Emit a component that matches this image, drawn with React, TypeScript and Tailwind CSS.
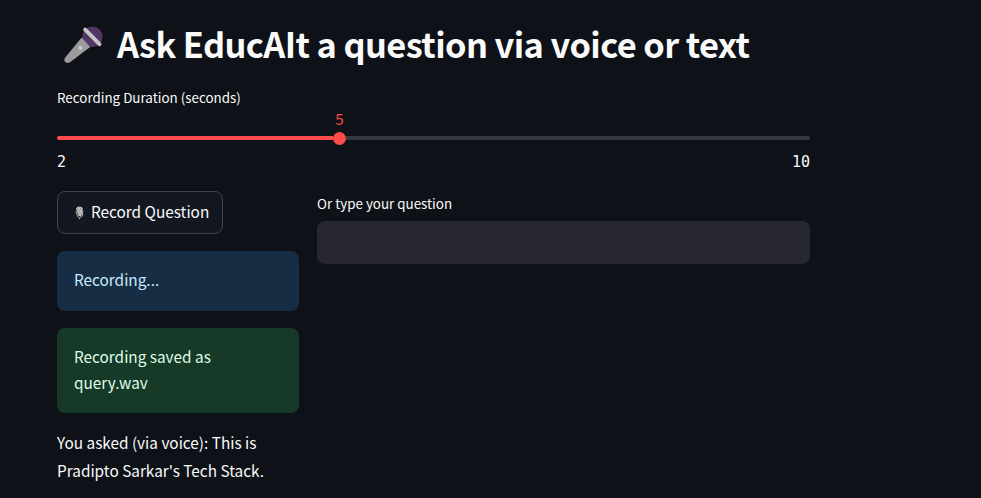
import React from "react";

const sans = "font-['Noto_Sans_CJK_SC','Noto_Sans',sans-serif]";
const mono = "font-['DejaVu_Sans_Mono','Liberation_Mono',monospace]";

function Microphone() {
  return (
    <svg className="ml-[7px] mt-[6px] h-[38px] w-[40px] shrink-0" viewBox="0 0 40 38" aria-hidden="true">
      <circle cx="28.4" cy="10.8" r="10.2" fill="#533566" />
      <path d="M17.7 11.6 L1.2 31.6 Q-0.6 34.2 1.4 36.1 Q3.4 38 6 36.3 L26.2 20.9 Z" fill="#9b9b9b" />
      <path d="M21.2 3.6 L35.5 18.1" stroke="#c3c3c3" strokeWidth="4" strokeLinecap="round" />
      <circle cx="16.4" cy="21.9" r="2.1" fill="#c9c9c9" />
    </svg>
  );
}

function StudioMicrophone() {
  return (
    <svg className="h-[14px] w-[9px] shrink-0" viewBox="0 0 9 14" aria-hidden="true">
      <path d="M1 2.5 Q2 0.3 5 0.5 Q7.6 0.8 7.8 3 L7.3 8 L5.8 10.2 L3.2 9.8 Z" fill="#c4c2c3" />
      <path d="M2.4 2 L6.2 8.2 M4.6 1 L7.2 5 M1.6 4.4 L4 9" stroke="#808084" strokeWidth="0.7" />
      <path d="M0.8 5.2 L2.6 10.6 L4.4 11.5 L4.6 13.3 M7.9 5 L7.4 10.2 L5 11.5" fill="none" stroke="#aaa5a7" strokeWidth="1" />
    </svg>
  );
}

export default function App() {
  return (
    <main className={`h-[498px] w-[981px] overflow-hidden bg-[#0e1117] pl-[57px] pt-5 text-[#fafafa] ${sans}`}>
      <div className="w-[753px]">
        <h1 className="flex h-[52px] whitespace-nowrap text-[34.4px] font-bold leading-[46px] tracking-[-0.61px]">
          <Microphone />
          <span className="ml-[13px]">Ask EducAIt a question via voice or text</span>
        </h1>

        <section className="pt-4">
          <div className="h-5 text-[13.4px] leading-[18px]">Recording Duration (seconds)</div>
          <div className="ml-[272.5px] mt-[2px] h-5 w-5 text-center text-[15.2px] leading-4 text-[#ff4b4b]">5</div>
          <div className="mt-[1px] flex h-[14px] items-center">
            <div className="h-1 w-[276px] rounded-l-full bg-[#ff4b4b]" />
            <div className="h-[13px] w-[13px] rounded-full bg-[#ff4b4b]" />
            <div className="h-1 flex-1 rounded-r-full bg-[#363940]" />
          </div>
          <div className={`mt-[7px] flex h-5 justify-between text-[15px] leading-5 ${mono}`}>
            <span>2</span>
            <span>10</span>
          </div>
        </section>

        <div className="mt-[19px] flex gap-[18px]">
          <section className="w-[242px]">
            <button className="flex h-[43px] w-[166px] items-center whitespace-nowrap rounded-lg border border-[#41444c] bg-[#131720] pl-[17px] text-[15.35px]">
              <StudioMicrophone />
              <span className="ml-[7px] h-6 leading-5">Record Question</span>
            </button>
            <div className="mt-[17px] h-[60px] rounded-lg bg-[#172d43] px-[17px] pt-[15px] text-[15.35px] leading-[26px] text-[#c7ebff]">
              Recording...
            </div>
            <div className="mt-[17px] h-[85px] rounded-lg bg-[#173928] px-[17px] pt-[15px] text-[15.35px] leading-[26px] text-[#dffde9]">
              Recording saved as
              <br />
              query.wav
            </div>
            <p className="mt-[15px] whitespace-nowrap text-[15.35px] leading-[28px]">
              You asked (via voice): This is
              <br />
              Pradipto Sarkar's Tech Stack.
            </p>
          </section>

          <section className="flex-1 pt-[3px]">
            <label htmlFor="question" className="block h-5 text-[13.4px] leading-[18px]">Or type your question</label>
            <input id="question" type="text" className="mt-[7px] block h-[43px] w-full rounded-lg bg-[#262730] px-3 outline-none" />
          </section>
        </div>
      </div>
    </main>
  );
}
